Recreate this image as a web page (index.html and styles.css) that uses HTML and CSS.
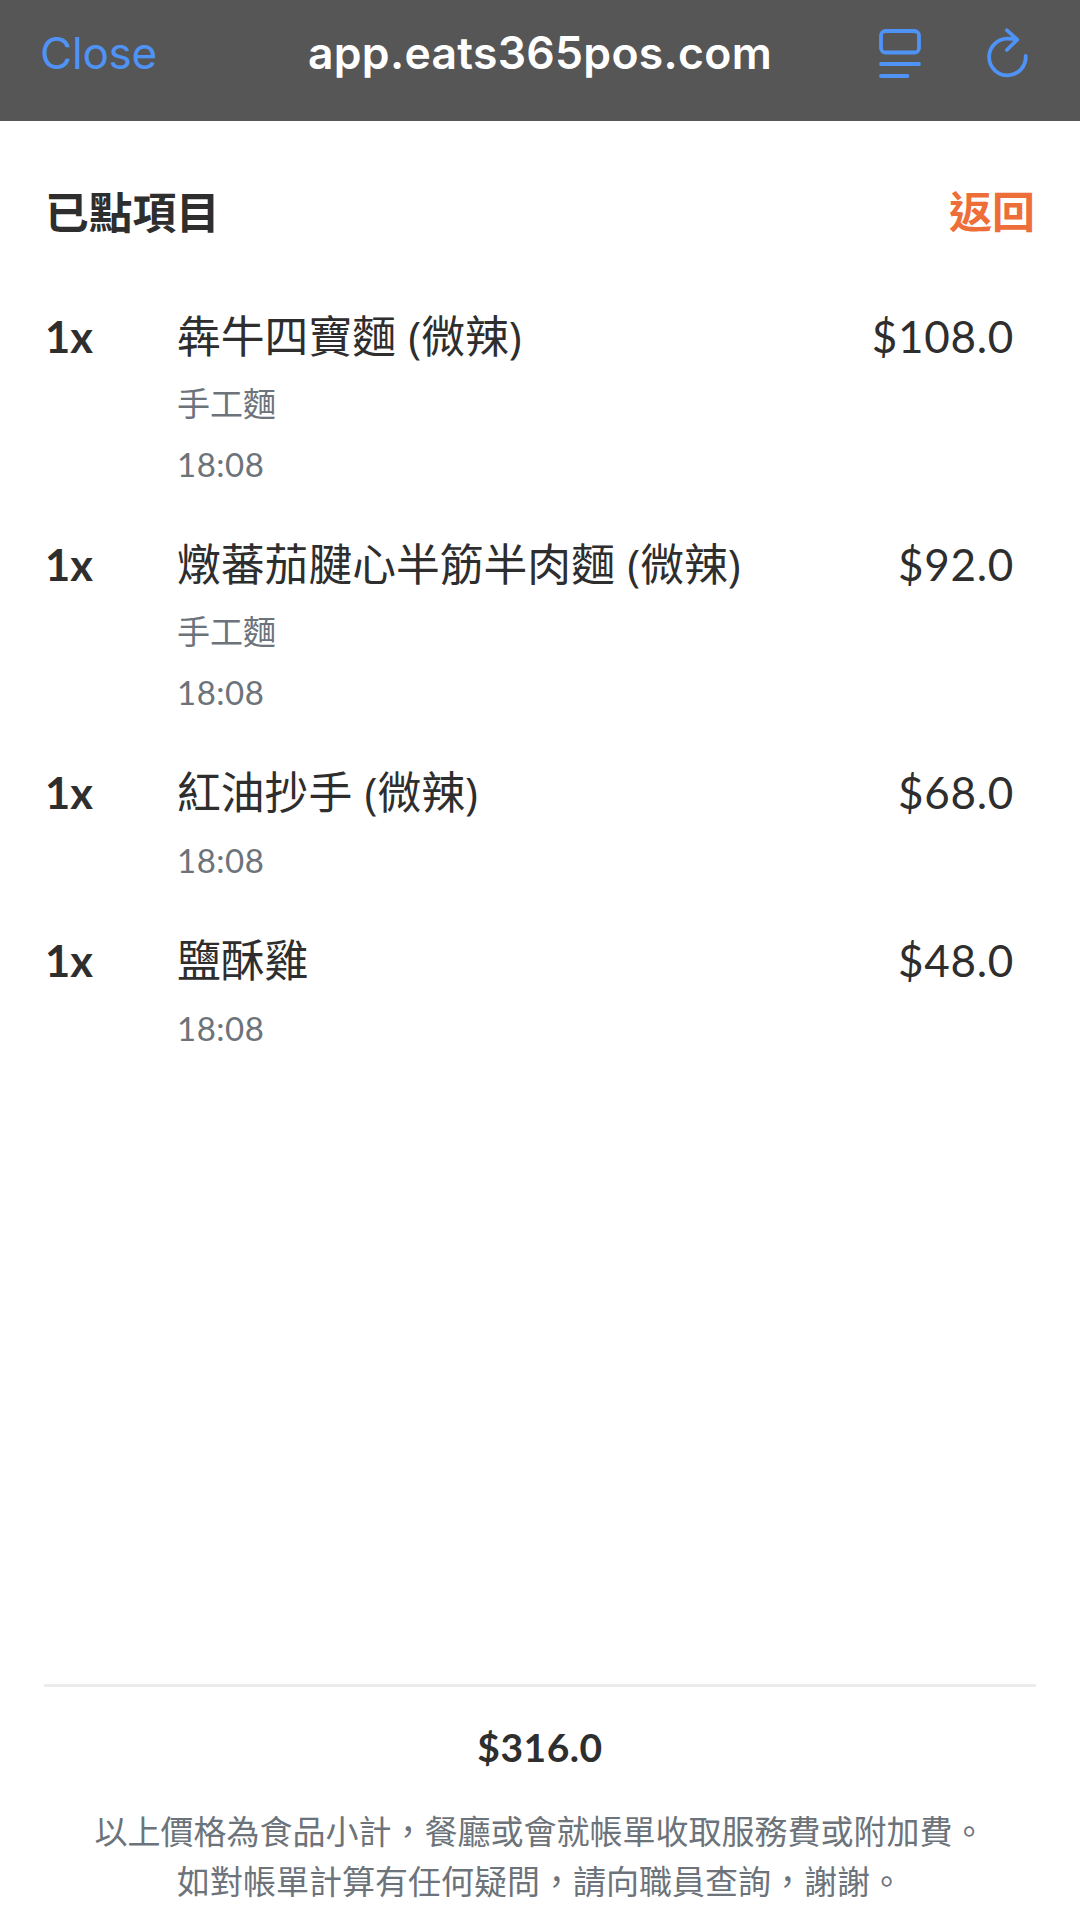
FILE: index.html
```html
<!DOCTYPE html>
<html lang="zh-Hant">
<head>
<meta charset="utf-8">
<title>已點項目</title>
<link rel="stylesheet" href="styles.css">
</head>
<body>
<header class="browser-bar">
  <span class="close">Close</span>
  <span class="domain">app.eats365pos.com</span>
  <span class="tools">
    <svg class="icon" width="44" height="55" viewBox="0 0 44 55"><rect x="3" y="6" width="38" height="21.500" rx="4.500"/><path d="M3 39H41M3 51H29.500"/></svg>
    <svg class="icon" width="44" height="55" viewBox="0 0 44 55"><path d="M31 14.500Q27 13.700 21.500 13.700A18.300 18.300 0 1 0 39.700 31M20.800 5.200L31.300 14.600L20.800 25"/></svg>
  </span>
</header>
<main class="page">
  <div class="title-row"><h1 class="title">已點項目</h1><a class="back">返回</a></div>
  <ul class="items">
    <li class="item"><span class="qty">1x</span><div class="info"><p class="name">犇牛四寶麵 (微辣)</p><p class="sub">手工麵</p><p class="sub time">18:08</p></div><span class="price">$108.0</span></li>
    <li class="item"><span class="qty">1x</span><div class="info"><p class="name">燉蕃茄腱心半筋半肉麵 (微辣)</p><p class="sub">手工麵</p><p class="sub time">18:08</p></div><span class="price">$92.0</span></li>
    <li class="item"><span class="qty">1x</span><div class="info"><p class="name">紅油抄手 (微辣)</p><p class="sub time">18:08</p></div><span class="price">$68.0</span></li>
    <li class="item"><span class="qty">1x</span><div class="info"><p class="name">鹽酥雞</p><p class="sub time">18:08</p></div><span class="price">$48.0</span></li>
  </ul>
  <footer class="summary">
    <p class="total">$316.0</p>
    <p class="note">以上價格為食品小計，餐廳或會就帳單收取服務費或附加費。</p>
    <p class="note">如對帳單計算有任何疑問，請向職員查詢，謝謝。</p>
  </footer>
</main>
</body>
</html>
```
FILE: styles.css
```css
* { box-sizing: border-box; margin: 0; padding: 0; }
body { height: 1928px; display: flex; flex-direction: column; background: #fff; color: #2e2e2e; font-family: "Open Sans", "Noto Sans CJK TC", sans-serif; }
.browser-bar { height: 121px; flex: none; background: #565656; display: grid; grid-template-columns: 240px 1fr 240px; padding: 0 40px 16px; align-items: center; font-family: Inter, sans-serif; line-height: 60px; }
.close { color: #4f93f7; font-size: 44px; letter-spacing: -0.2px; }
.domain { color: #fff; font-size: 44.5px; font-weight: 600; text-align: center; white-space: nowrap; letter-spacing: 0.3px; }
.tools { display: flex; justify-content: flex-end; gap: 64px; padding-right: 10px; }
.icon { fill: none; stroke: #4f93f7; stroke-width: 3.8; stroke-linecap: round; stroke-linejoin: round; }
.page { flex: 1; display: flex; flex-direction: column; padding: 0 44px; }
.title-row { display: flex; justify-content: space-between; height: 183px; padding: 61px 1px 0; line-height: 60px; }
.title { font-size: 43.7px; font-weight: 700; }
.back { color: #ee6e39; font-size: 43px; font-weight: 700; }
.items { list-style: none; flex: 1; }
.item { display: grid; grid-template-columns: 132px 1fr auto; padding: 0 22px 38px 1px; line-height: 64px; }
.qty { font-family: Lato, sans-serif; font-weight: 700; font-size: 43.5px; }
.name { font-size: 43.8px; margin-bottom: 6px; word-spacing: 1px; white-space: nowrap; }
.sub { color: #6c737a; font-size: 33px; line-height: 60px; }
.time { font-family: Lato, sans-serif; font-size: 33px; letter-spacing: 0.5px; }
.price { font-family: Lato, sans-serif; font-size: 44px; letter-spacing: 0.7px; }
.summary { border-top: 3px solid #ebebee; height: 244px; text-align: center; padding-top: 30px; }
.total { font-family: Lato, sans-serif; font-weight: 700; font-size: 39px; line-height: 60px; margin-bottom: 30px; letter-spacing: 0.5px; }
.note { color: #6c737a; font-size: 33px; line-height: 49.5px; white-space: nowrap; }
```
